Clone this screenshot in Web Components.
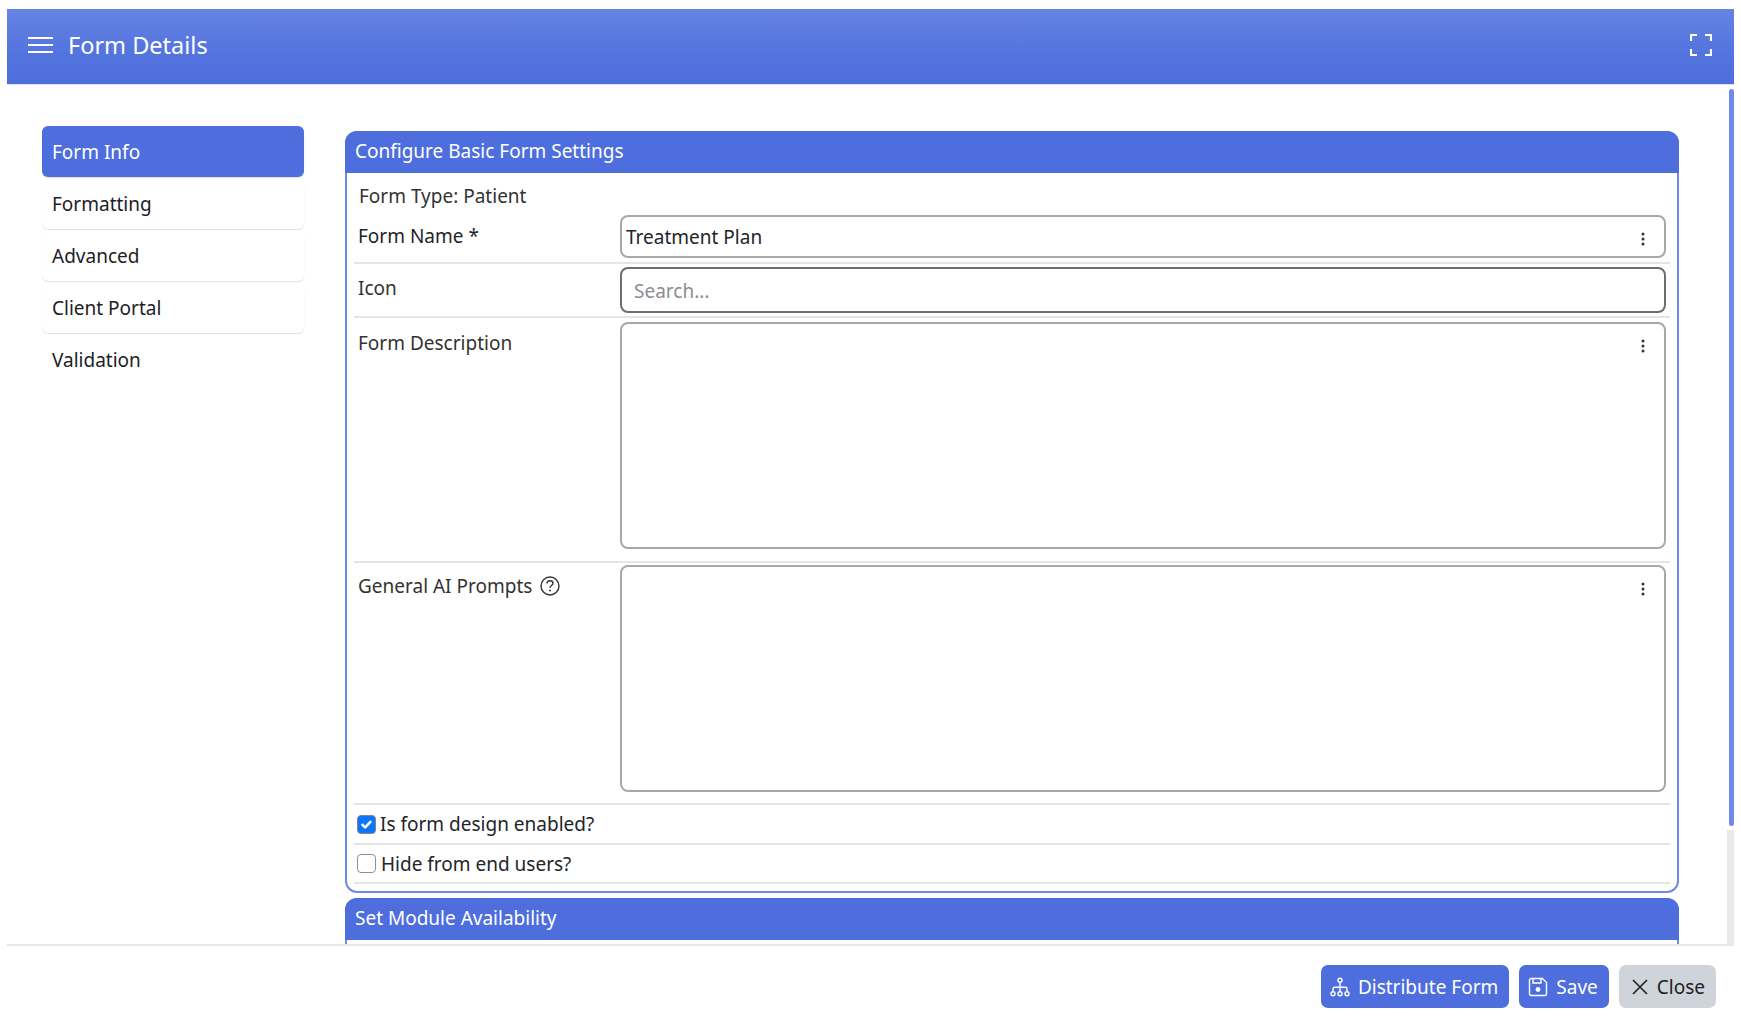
<!DOCTYPE html>
<html>
<head>
<meta charset="utf-8">
<title>Form Details</title>
<style>
  html, body { margin: 0; height: 100%; background: #fff; }
  body { font-family: "Noto Sans", "Open Sans", sans-serif; font-size: 19px; color: #212529; overflow: hidden; }
</style>
</head>
<body>
<form-dialog>
  <dialog-header slot="header" title-text="Form Details"></dialog-header>

  <side-nav slot="nav">
    <nav-item active>Form Info</nav-item>
    <nav-item>Formatting</nav-item>
    <nav-item>Advanced</nav-item>
    <nav-item>Client Portal</nav-item>
    <nav-item plain>Validation</nav-item>
  </side-nav>

  <form-card heading="Configure Basic Form Settings">
    <div style="height:40px;padding-top:2px;line-height:42px;padding-left:5px;color:#333">Form Type: Patient</div>
    <form-row label="Form Name *" strong pb="4"><text-field h="43" menu value-text="Treatment Plan"></text-field></form-row>
    <form-row label="Icon" pt="3" pb="3"><text-field h="46" focus placeholder="Search..."></text-field></form-row>
    <form-row label="Form Description" pt="4" pb="12"><text-field h="227" menu></text-field></form-row>
    <form-row label="General AI Prompts" help pt="2" pb="11"><text-field h="227" menu></text-field></form-row>
    <check-row checked>Is form design enabled?</check-row>
    <check-row short>Hide from end users?</check-row>
  </form-card>
  <form-card heading="Set Module Availability" body-height="146"></form-card>

  <dialog-footer slot="footer">
    <action-button icon="diagram">Distribute Form</action-button>
    <action-button icon="save">Save</action-button>
    <action-button icon="close" kind="grey">Close</action-button>
  </dialog-footer>
</form-dialog>

<script>
const dialogTemplate = document.createElement('template');
dialogTemplate.innerHTML = `
  <style>
    :host { display: flex; flex-direction: column; height: 1019px; box-sizing: border-box; padding: 9px 7px 0 7px; }
    .main { flex: 1; min-height: 0; display: flex; }
    .scroll {
      flex: 1;
      min-width: 0;
      overflow: hidden;
      display: flex;
      align-items: flex-start;
      gap: 41px;
      padding: 41px 48px 0 35px;
      box-sizing: border-box;
    }
    .cards { flex: 1; min-width: 0; padding-top: 5px; display: flex; flex-direction: column; gap: 5px; }
  </style>
  <slot name="header"></slot>
  <div class="main">
    <div class="scroll">
      <slot name="nav"></slot>
      <div class="cards"><slot></slot></div>
    </div>
    <scroll-rail></scroll-rail>
  </div>
  <slot name="footer"></slot>
`;
class FormDialog extends HTMLElement {
  constructor() {
    super();
    this.attachShadow({ mode: 'open' }).appendChild(dialogTemplate.content.cloneNode(true));
  }
}

// the browser hides real scrollbars when photographed, so this one is drawn
class ScrollRail extends HTMLElement {
  constructor() {
    super();
    this.attachShadow({ mode: 'open' }).innerHTML = `
      <style>
        :host { display: flex; flex-direction: column; width: 7px; flex: none; }
        .top { height: 4px; }
        .thumb { height: 737px; margin-left: 2px; background: #6f8ae6; border-radius: 3px; }
        .gap { height: 4px; }
        .track { flex: 1; background: #ece8e8; }
      </style>
      <div class="top"></div>
      <div class="thumb"></div>
      <div class="gap"></div>
      <div class="track"></div>
    `;
  }
}

class DialogHeader extends HTMLElement {
  constructor() {
    super();
    this.attachShadow({ mode: 'open' }).innerHTML = `
      <style>
        :host {
          display: flex; align-items: center; flex: none;
          background: linear-gradient(#6684e4 0%, #5373de 60%, #4e6edd 100%);
          border-bottom: 1px solid #dfe3f0; box-sizing: content-box;
          color: #fff; padding: 0 22px 4px 21px; height: 71px;
        }
        .title { font-size: 23.5px; margin-left: 15px; flex: 1; }
        svg { display: block; }
      </style>
      <svg width="25" height="18" viewBox="0 0 25 18" fill="none" stroke="#fff" stroke-width="2"><path d="M0 2h25M0 9h25M0 16h25"/></svg>
      <span class="title">${this.getAttribute('title-text')}</span>
      <svg width="22" height="22" viewBox="0 0 22 22" fill="none" stroke="#fff" stroke-width="2.2"><path d="M7 1H1v6M15 1h6v6M1 15v6h6M21 15v6h-6"/></svg>
    `;
  }
}

class SideNav extends HTMLElement {
  constructor() {
    super();
    this.attachShadow({ mode: 'open' }).innerHTML = `
      <style>:host { display: flex; flex-direction: column; width: 262px; flex: none; }</style>
      <slot></slot>
    `;
  }
}

class NavItem extends HTMLElement {
  constructor() {
    super();
    this.attachShadow({ mode: 'open' }).innerHTML = `
      <style>
        :host {
          display: flex; align-items: center; height: 51px; margin-bottom: 1px;
          padding-left: 10px; border-radius: 6px; color: #1d2125;
          box-sizing: border-box; box-shadow: 0 1px 1px #dde1e8;
        }
        :host([active]) { background: #4e6edd; color: #fff; }
        :host([plain]) { box-shadow: none; }
      </style>
      <slot></slot>
    `;
  }
}

class FormCard extends HTMLElement {
  constructor() {
    super();
    const bodyHeight = this.getAttribute('body-height');
    this.attachShadow({ mode: 'open' }).innerHTML = `
      <style>
        :host { display: block; }
        .box { border: 2px solid #6f8ae6; border-radius: 12px; }
        .head {
          background: #4e6edd; color: #fff; height: 42px; line-height: 40px;
          margin: -2px -2px 0; padding-left: 10px;
          border-radius: 12px 12px 0 0;
        }
        .body { padding: 0 7px 7px; ${bodyHeight ? 'height:' + bodyHeight + 'px;' : ''} }
      </style>
      <div class="box">
        <div class="head">${this.getAttribute('heading')}</div>
        <div class="body"><slot></slot></div>
      </div>
    `;
  }
}

class FormRow extends HTMLElement {
  constructor() {
    super();
    const pt = this.getAttribute('pt') || 0;
    const pb = this.getAttribute('pb') || 0;
    const help = this.hasAttribute('help') ? `
      <svg class="help" width="20" height="20" viewBox="0 0 20 20" fill="none" stroke="#333" stroke-width="1.4">
        <circle cx="10" cy="10" r="9"/>
        <path d="M7 7.6c0-1.8 1.3-2.8 3-2.8s3 1 3 2.5c0 2.2-3 2.2-3 4.4"/>
        <circle cx="10" cy="14.6" r="1" fill="#333" stroke="none"/>
      </svg>` : '';
    this.attachShadow({ mode: 'open' }).innerHTML = `
      <style>
        :host {
          display: grid; grid-template-columns: 266px 1fr;
          padding: ${pt}px 4px ${pb}px 0;
          border-bottom: 2px solid #e5e5e5;
        }
        .label { padding: 8px 0 0 4px; line-height: 26px; color: #333; display: flex; align-items: center; align-self: start; gap: 8px; }
        :host([strong]) .label { color: #212529; }
      </style>
      <div class="label">${this.getAttribute('label')}${help}</div>
      <slot></slot>
    `;
  }
}

class TextField extends HTMLElement {
  constructor() {
    super();
    const menu = this.hasAttribute('menu') ? `
      <svg class="menu" width="4" height="14" viewBox="0 0 4 14" fill="#333"><circle cx="2" cy="2" r="1.5"/><circle cx="2" cy="7" r="1.5"/><circle cx="2" cy="12" r="1.5"/></svg>` : '';
    const value = this.getAttribute('value-text');
    const placeholder = this.getAttribute('placeholder');
    this.attachShadow({ mode: 'open' }).innerHTML = `
      <style>
        :host {
          display: block; position: relative; box-sizing: border-box;
          height: ${this.getAttribute('h')}px;
          border: 2px solid #a8a8a8; border-radius: 8px; background: #fff;
          padding: 1px 4px 0; line-height: ${this.getAttribute('h') - 4}px;
        }
        :host([focus]) { border-color: #6b6f75; padding: 1px 0 0 12px; }
        .menu { position: absolute; right: 19px; top: 15px; }
        .ph { color: #8a8d91; }
      </style>
      ${value ? `<span>${value}</span>` : ''}
      ${placeholder ? `<span class="ph">${placeholder}</span>` : ''}
      ${menu}
    `;
  }
}

class CheckRow extends HTMLElement {
  constructor() {
    super();
    const mark = this.hasAttribute('checked')
      ? '<svg width="19" height="19" viewBox="0 0 19 19" fill="none" stroke="#fff" stroke-width="2.6" stroke-linecap="round" stroke-linejoin="round"><path d="M5.4 9.8l2.8 2.6 5.2-5.6"/></svg>'
      : '';
    this.attachShadow({ mode: 'open' }).innerHTML = `
      <style>
        :host {
          display: flex; align-items: center; height: 38px; gap: 4px;
          padding-left: 3px; border-bottom: 2px solid #e5e5e5; color: #212529;
        }
        :host([short]) { height: 37px; gap: 5px; }
        .box {
          width: 19px; height: 19px; flex: none; box-sizing: border-box;
          border: 1px solid #8f8f8f; border-radius: 4px; background: #fff;
          display: flex; align-items: center; justify-content: center;
        }
        .box svg { margin: -1px; flex: none; }
        :host([checked]) .box { background: #0b76fb; border-color: #7d8794; }
      </style>
      <span class="box">${mark}</span>
      <slot></slot>
    `;
  }
}

class DialogFooter extends HTMLElement {
  constructor() {
    super();
    this.attachShadow({ mode: 'open' }).innerHTML = `
      <style>
        :host {
          display: flex; justify-content: flex-end; gap: 10px; flex: none;
          height: 75px; box-sizing: border-box;
          border-top: 2px solid #e8e8e8;
          padding: 19px 18px 0 0;
        }
      </style>
      <slot></slot>
    `;
  }
}

const buttonIcons = {
  diagram: `<svg width="20" height="20" viewBox="0 0 20 20" fill="none" stroke="currentColor" stroke-width="1.4">
    <circle cx="10" cy="3.2" r="2"/><circle cx="3" cy="16.8" r="2"/><circle cx="10" cy="16.8" r="2"/><circle cx="17" cy="16.8" r="2"/>
    <path d="M10 5.2v9.6M3 14.8v-3a1.5 1.5 0 0 1 1.5-1.5h11a1.5 1.5 0 0 1 1.5 1.5v3"/></svg>`,
  save: `<svg width="20" height="20" viewBox="0 0 20 20" fill="none" stroke="currentColor" stroke-width="1.4">
    <path d="M3 1.5h11.5l4 4V17a1.5 1.5 0 0 1-1.5 1.5H3A1.5 1.5 0 0 1 1.5 17V3A1.5 1.5 0 0 1 3 1.5z"/>
    <path d="M5 1.5v4.5h8V1.5"/><circle cx="10" cy="12.5" r="2.4" fill="currentColor" stroke="none"/></svg>`,
  close: `<svg width="18" height="18" viewBox="0 0 18 18" fill="none" stroke="currentColor" stroke-width="1.6"><path d="M2 2l14 14M16 2L2 16"/></svg>`
};

class ActionButton extends HTMLElement {
  constructor() {
    super();
    this.attachShadow({ mode: 'open' }).innerHTML = `
      <style>
        :host {
          display: inline-flex; align-items: center; gap: 8px; height: 43px;
          padding: 0 11px 0 9px; box-sizing: border-box; border-radius: 7px;
          background: #4e6edd; color: #fff; font-size: 19px;
        }
        :host([kind="grey"]) { background: #ced4da; color: #1d2125; padding-left: 12px; }
        svg { display: block; flex: none; }
      </style>
      ${buttonIcons[this.getAttribute('icon')]}
      <slot></slot>
    `;
  }
}

customElements.define('scroll-rail', ScrollRail);
customElements.define('form-dialog', FormDialog);
customElements.define('dialog-header', DialogHeader);
customElements.define('side-nav', SideNav);
customElements.define('nav-item', NavItem);
customElements.define('form-card', FormCard);
customElements.define('form-row', FormRow);
customElements.define('text-field', TextField);
customElements.define('check-row', CheckRow);
customElements.define('dialog-footer', DialogFooter);
customElements.define('action-button', ActionButton);
</script>
</body>
</html>
